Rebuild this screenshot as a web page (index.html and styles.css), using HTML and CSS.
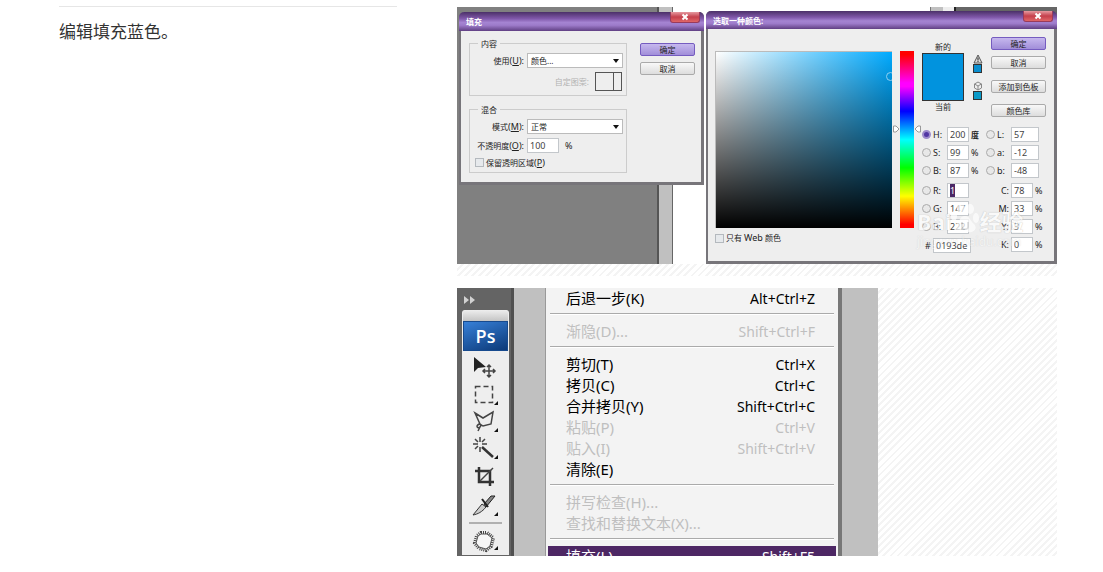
FILE: index.html
```html
<!DOCTYPE html>
<html lang="zh-CN">
<head>
<meta charset="utf-8">
<title>编辑填充蓝色</title>
<link rel="stylesheet" href="styles.css">
</head>
<body>
<main class="step">
  <section class="step-text"><p>编辑填充蓝色。</p></section>
  <section class="step-media">
    <figure class="frame frame-dialogs">
      <div class="desktop">
        <form class="dialog fill-dialog">
          <header class="titlebar"><h2>填充</h2><button type="button" class="close" aria-label="关闭"><svg viewBox="0 0 8 8"><path d="M1.500 1.500L6.500 6.500M6.500 1.500L1.500 6.500"/></svg></button></header>
          <div class="fill-body">
            <div class="fill-groups">
              <fieldset>
                <legend>内容</legend>
                <div class="field"><label for="use">使用<span class="key">(<u>U</u>):</span></label><span class="select"><select id="use"><option>颜色...</option></select></span></div>
                <div class="pattern"><span>自定图案:</span><button type="button" class="pattern-pick" aria-label="自定图案"></button></div>
              </fieldset>
              <fieldset>
                <legend>混合</legend>
                <div class="field"><label for="mode">模式<span class="key">(<u>M</u>):</span></label><span class="select"><select id="mode"><option>正常</option></select></span></div>
                <div class="field"><label for="opacity">不透明度<span class="key">(<u>O</u>):</span></label><span class="opacity"><input type="text" id="opacity" value="100"><span>%</span></span></div>
                <label class="check preserve"><input type="checkbox"><span>保留透明区域<span class="key">(<u>P</u>)</span></span></label>
              </fieldset>
            </div>
            <div class="fill-actions"><button type="button" class="btn primary">确定</button><button type="button" class="btn">取消</button></div>
          </div>
        </form>

        <form class="dialog picker-dialog">
          <header class="titlebar"><h2>选取一种颜色:</h2><button type="button" class="close" aria-label="关闭"><svg viewBox="0 0 8 8"><path d="M1.500 1.500L6.500 6.500M6.500 1.500L1.500 6.500"/></svg></button></header>
          <div class="picker-body">
            <div class="spectrum">
              <div class="shade"><span class="shade-mark"></span></div>
              <label class="check"><input type="checkbox"><span>只有 <span class="key">Web</span> 颜色</span></label>
            </div>
            <div class="hue">
              <svg class="hue-mark" viewBox="0 0 30 8"><path d="M1.500 1h2.500l3 3-3 3H1.500zM28.500 1H26l-3 3 3 3h2.500z" fill="#fff" stroke="#999"/></svg>
            </div>
            <div class="picker-side">
              <div class="picker-top">
                <div class="swatch-col"><span>新的</span><span class="swatch"></span><span>当前</span></div>
                <div class="alerts">
                  <svg viewBox="0 0 10 10"><path d="M5 1l4 8H1z" fill="#ddd" stroke="#555"/><path d="M5 3.500v3M5 7v1" stroke="#222"/></svg><i class="chip"></i>
                  <svg class="cube" viewBox="0 0 10 10"><path d="M5 1l3.500 2v4L5 9 1.500 7V3zM1.500 3L5 5l3.500-2M5 5v4" fill="#eee" stroke="#888"/></svg><i class="chip teal"></i>
                </div>
                <div class="picker-actions">
                  <div class="pair"><button type="button" class="btn primary">确定</button><button type="button" class="btn">取消</button></div>
                  <button type="button" class="btn">添加到色板</button>
                  <button type="button" class="btn">颜色库</button>
                </div>
              </div>
              <div class="values">
                <div class="value-col">
                  <div class="value"><input type="radio" name="c" aria-label="色相" checked><label for="vh">H:</label><input type="text" id="vh" value="200"><b>度</b></div>
                  <div class="value"><input type="radio" name="c" aria-label="饱和度"><label for="vs">S:</label><input type="text" id="vs" value="99"><span>%</span></div>
                  <div class="value"><input type="radio" name="c" aria-label="亮度"><label for="vb">B:</label><input type="text" id="vb" value="87"><span>%</span></div>
                </div>
                <div class="value-col">
                  <div class="value"><input type="radio" name="c" aria-label="L"><label for="vl">L:</label><input type="text" class="wide" id="vl" value="57"></div>
                  <div class="value"><input type="radio" name="c" aria-label="a"><label for="va">a:</label><input type="text" class="wide" id="va" value="-12"></div>
                  <div class="value"><input type="radio" name="c" aria-label="b"><label for="vbb">b:</label><input type="text" class="wide" id="vbb" value="-48"></div>
                </div>
                <div class="value-col">
                  <div class="value"><input type="radio" name="c" aria-label="红"><span id="red-label">R:</span><span class="selected-box" role="textbox" tabindex="0" aria-labelledby="red-label"><mark>1</mark></span></div>
                  <div class="value"><input type="radio" name="c" aria-label="绿"><label for="vg">G:</label><input type="text" id="vg" value="147"></div>
                  <div class="value"><input type="radio" name="c" aria-label="蓝"><label for="vblue">B:</label><input type="text" id="vblue" value="222"></div>
                  <div class="hex"><label for="hex">#</label><input type="text" id="hex" value="0193de"></div>
                </div>
                <div class="value-col">
                  <div class="value ink"><label for="vc">C:</label><input type="text" id="vc" value="78"><span>%</span></div>
                  <div class="value ink"><label for="vm">M:</label><input type="text" id="vm" value="33"><span>%</span></div>
                  <div class="value ink"><label for="vy">Y:</label><input type="text" id="vy" value="3"><span>%</span></div>
                  <div class="value ink"><label for="vk">K:</label><input type="text" id="vk" value="0"><span>%</span></div>
                </div>
              </div>
            </div>
          </div>
        </form>
        <div class="watermark">
          <div class="watermark-brand"><span>Bai</span><svg viewBox="0 0 28 32"><g fill="#fff"><ellipse cx="10" cy="6" rx="4" ry="6"/><ellipse cx="19" cy="7" rx="4" ry="5"/><ellipse cx="3" cy="14" rx="3" ry="5"/><ellipse cx="25" cy="16" rx="3" ry="5"/><path d="M14 14c5 0 5 5 9 8 4 4 0 9-5 8h-8c-6 1-9-4-5-8 4-3 4-8 9-8z"/></g><path d="M11 20v5c0 3 6 3 6 0v-5" fill="none" stroke="#ccc" stroke-width="1.500"/></svg><span>经验</span></div>
          <div class="watermark-site">jingyan.baidu.com</div>
        </div>
      </div>
    </figure>

    <figure class="frame frame-menu">
      <div class="workspace">
        <aside class="tools">
          <svg class="expand" viewBox="0 0 12 8"><path d="M0 0l5 4-5 4zM6 0l5 4-5 4z" fill="#d2d2d2"/></svg>
          <div class="tool-panel">
            <div class="grip"></div>
            <div class="ps">Ps</div>
            <button type="button" class="tool" aria-label="移动"><svg viewBox="0 0 28 27"><path d="M2 2v15l4-4 8-1z" fill="#222"/><path d="M17 10v12M11 16h12M15 12l2-2 2 2M15 20l2 2 2-2M13 14l-2 2 2 2M21 14l2 2-2 2" class="ln"/></svg></button>
            <button type="button" class="tool" aria-label="选框"><svg viewBox="0 0 28 27"><path d="M3.500 4.500h17v16h-17z" class="ln" stroke-dasharray="5 3"/><path class="corner" d="M26 19v4h-4z"/></svg></button>
            <button type="button" class="tool" aria-label="套索"><svg viewBox="0 0 28 27"><path d="M3 4l8 5 10-6-2 12-8 2-3-2zM7 15c-4 2-1 5 1 3s0-4-2-2M8 18l-2 4" class="ln"/><path class="corner" d="M26 19v4h-4z"/></svg></button>
            <button type="button" class="tool" aria-label="魔棒"><svg viewBox="0 0 28 27"><path d="M8 1v5M8 11v5M1 8h5M10 8h5M3 3l3 3M13 3l-3 3M3 13l3-3" class="ln"/><path d="M10 11l11 10" stroke="#333" stroke-width="2.500"/><path class="corner" d="M26 19v4h-4z"/></svg></button>
            <button type="button" class="tool" aria-label="裁剪"><svg viewBox="0 0 28 27"><path d="M7 4v15h15M3 8h15v15" stroke="#333" stroke-width="2.500" fill="none"/><path d="M8 18L21 5" class="ln"/></svg></button>
            <button type="button" class="tool" aria-label="切片"><svg viewBox="0 0 28 27"><path d="M1 25l9-11 4 3C10 22 6 24 1 25z" fill="#ccc" stroke="#333"/><path d="M12 14l7-8h4l-9 11z" fill="#888" stroke="#222"/><path d="M10 9l6 8" stroke="#222" stroke-width="2"/><path class="corner" d="M26 22v4h-4z"/></svg></button>
            <hr>
            <button type="button" class="tool" aria-label="修补"><svg viewBox="0 0 28 27"><path d="M9 5h6l6 5-2 8-5 4-7-2-4-5 2-7z" fill="#f7f7f7" stroke="#444" stroke-width="4" stroke-dasharray="1 1"/><path d="M9 6h6l5 4-2 8-4 3-7-2-3-4 2-7z" fill="#f7f7f7" stroke="#555"/><path class="corner" d="M26 18v4h-4z"/></svg></button>
          </div>
        </aside>
        <nav class="menu">
          <button type="button" class="item"><span>后退一步(K)</span><kbd>Alt+Ctrl+Z</kbd></button>
          <hr>
          <button type="button" class="item" disabled><span>渐隐(D)...</span><kbd>Shift+Ctrl+F</kbd></button>
          <hr>
          <button type="button" class="item"><span>剪切(T)</span><kbd>Ctrl+X</kbd></button>
          <button type="button" class="item"><span>拷贝(C)</span><kbd>Ctrl+C</kbd></button>
          <button type="button" class="item"><span>合并拷贝(Y)</span><kbd>Shift+Ctrl+C</kbd></button>
          <button type="button" class="item" disabled><span>粘贴(P)</span><kbd>Ctrl+V</kbd></button>
          <button type="button" class="item" disabled><span>贴入(I)</span><kbd>Shift+Ctrl+V</kbd></button>
          <button type="button" class="item"><span>清除(E)</span></button>
          <hr>
          <button type="button" class="item" disabled><span>拼写检查(H)...</span></button>
          <button type="button" class="item" disabled><span>查找和替换文本(X)...</span></button>
          <hr>
          <button type="button" class="item active"><span>填充(L)</span><kbd>Shift+F5</kbd></button>
        </nav>
      </div>
    </figure>
  </section>
</main>
</body>
</html>
```
FILE: styles.css
```css
* { box-sizing: border-box; }
body { margin: 0; background: #fff; color: #333; font-family: "Noto Sans", "Noto Sans CJK SC", sans-serif; }
button, input, select { font: inherit; color: inherit; margin: 0; padding: 0; }
svg { display: block; }

.step { display: flex; gap: 60px; padding: 6px 46px 16px 59px; }
.step-text { flex: 1; border-top: 1px solid #e6e6e6; }
.step-text p { margin: 12px 0 0; font-family: "Noto Sans CJK SC", sans-serif; font-size: 17px; line-height: 24px; }
.step-media { flex: 0 0 600px; padding-top: 1px; display: flex; flex-direction: column; gap: 12px; }
.frame { margin: 0; background: repeating-linear-gradient(135deg, #f4f4f4 0 2px, #fff 2px 5px); }
.frame-dialogs { padding-bottom: 12px; }

/* Desktop with the two dialogs */
.desktop {
  position: relative; height: 257px; overflow: hidden; font-size: 8px; line-height: 10px; color: #222;
  background: linear-gradient(90deg, #808080 200px, #555 200px 202px, #c0c0c0 202px 215px, #666 215px 216px, #fff 216px 473px, #777 473px 474px, #c0c0c0 474px 486px, #eee 486px 497px, #222 497px 499px, #666 499px);
}
.dialog { position: absolute; background: #eee; border: solid #77757a; border-width: 0 3px 3px 2px; border-radius: 5px 5px 0 0; }
.fill-dialog { left: 2px; top: 5px; width: 245px; }
.picker-dialog { left: 249px; top: 4px; width: 351px; height: 253px; }
.titlebar {
  display: flex; justify-content: space-between; align-items: flex-start; height: 19px; margin: 0 -3px 0 -2px; padding: 0 4px 0 7px;
  border-radius: 5px 5px 0 0; background: linear-gradient(#4b3068, #8058aa 35%, #a584d2 55%, #9d7bca 70%, #603f83);
}
.titlebar h2 { margin: 0; font-size: 8px; line-height: 20px; color: #fff; font-weight: 700; }
.close { display: grid; place-items: center; width: 30px; height: 11px; border: 1px solid #993b5b; border-top: 0; border-radius: 0 0 3px 3px; background: linear-gradient(#e69aa0, #c5404c 50%, #e06668); }
.close svg { width: 8px; height: 8px; stroke: #fff; stroke-width: 2; }
.key, .desktop input { font-size: 9px; }
.desktop input[type="text"], .selected-box { width: 100%; height: 15px; padding: 0 2px; border: 1px solid #c3c7cb; background: #fff; color: #444; }
.btn { width: 55px; height: 13px; border: 1px solid #aaa; border-radius: 2px; background: linear-gradient(#f8f8f8, #ddd); line-height: 8px; white-space: nowrap; text-align: center; }
.btn.primary { border-color: #755cc0; background: linear-gradient(#c6b8ee, #a18ed9); }
.check { display: flex; align-items: center; gap: 2px; white-space: nowrap; }
.check input { appearance: none; width: 9px; height: 9px; border: 1px solid #b4b9be; background: #e6e9ec; }

.fill-body { display: flex; gap: 13px; padding: 8px 6px 9px 8px; }
.fill-groups { flex: 1; display: flex; flex-direction: column; gap: 9px; }
fieldset { min-width: 0; margin: 0; padding: 5px 3px 4px 0; border: 1px solid #ccc; display: flex; flex-direction: column; gap: 5px; }
legend { margin-left: 8px; padding: 0 3px; line-height: 9px; }
.field { display: grid; grid-template-columns: 54px 1fr; gap: 3px; align-items: center; height: 14px; white-space: nowrap; }
.field > label { text-align: right; }
.select { position: relative; display: block; height: 15px; }
.select::after { content: ""; position: absolute; right: 4px; top: 6px; border: solid transparent; border-width: 4px 3px 0; border-top-color: #111; }
.select select { appearance: none; display: block; width: 100%; height: 15px; padding: 0 3px; border: 1px solid #bbb; border-radius: 0; background: #fff; line-height: 12px; }
.opacity { display: grid; grid-template-columns: 32px 20px; gap: 6px; align-items: center; font-size: 9px; }
.pattern { display: flex; justify-content: flex-end; align-items: center; gap: 6px; padding-right: 1px; color: #b2b2b2; }
.pattern-pick { width: 27px; height: 19px; border: 1px solid #555; background: linear-gradient(90deg, #eee 17px, #555 17px 18px, #eee 18px); }
.preserve { padding-left: 5px; height: 11px; }
.fill-actions { display: flex; flex-direction: column; gap: 6px; padding-top: 4px; }

.picker-dialog .titlebar { height: 18px; }
.picker-body { display: flex; padding: 8px 8px 0 7px; }
.spectrum { flex: 1; padding-top: 14px; display: flex; flex-direction: column; gap: 5px; }
.shade { position: relative; height: 177px; overflow: hidden; border: solid #bbb; border-width: 1px 0 0 1px; background: linear-gradient(to top, #000, transparent), linear-gradient(to right, #fff, #0af); }
.shade-mark { position: absolute; right: -3px; top: 20px; width: 9px; height: 9px; border: 1px solid #8fd0f2; border-radius: 50%; }
.hue { position: relative; width: 14px; height: 177px; margin: 14px 8px 0; background: linear-gradient(#f00 2%, #f0f 18%, #f0f 20%, #00f 34%, #0ff 50%, #0f0 66%, #ff0 82%, #f00 98%); }
.hue-mark { position: absolute; left: -8px; top: 74px; width: 30px; height: 8px; }
.picker-side { width: 124px; }
.picker-top { display: flex; justify-content: space-between; height: 90px; }
.swatch-col { width: 42px; padding-top: 5px; display: flex; flex-direction: column; align-items: center; gap: 1px; }
.swatch { width: 42px; height: 48px; border: 1px solid #333; background: #0193de; }
.alerts { width: 10px; padding-top: 17px; display: flex; flex-direction: column; align-items: center; }
.alerts svg { width: 10px; height: 10px; }
.alerts .cube { margin-top: 8px; }
.chip { width: 9px; height: 9px; border: 1px solid #333; background: #0a8fd0; }
.chip.teal { background: #0a9ac8; }
.picker-actions { display: flex; flex-direction: column; gap: 11px; }
.pair { display: flex; flex-direction: column; gap: 6px; }
.values { display: grid; grid-template-columns: 59px 59px; gap: 5px; }
.value-col { display: flex; flex-direction: column; gap: 3px; }
.value { display: grid; grid-template-columns: 9px 12px 22px 10px; gap: 2px; align-items: center; font-size: 9px; }
.value b { font-size: 8px; }
.value input[type="radio"] { appearance: none; width: 9px; height: 9px; border: 1px solid #aaa; border-radius: 50%; background: #e8e8e8; }
.value input[type="radio"]:checked { background: #5237a4; border: 2px solid #9d8bcb; }
.desktop .value .wide { width: 28px; }
.value.ink { grid-template-columns: 23px 22px 10px; }
.ink label { text-align: right; }
.selected-box { line-height: 13px; }
.selected-box mark { background: #4b2866; color: #fff; }
.hex { display: grid; grid-template-columns: 6px 38px; gap: 2px; padding-left: 3px; margin-top: 1px; align-items: center; font-size: 9px; }

.watermark { position: absolute; left: 460px; top: 193px; color: #fff; opacity: .7; pointer-events: none; text-shadow: 0 0 1px #999; white-space: nowrap; }
.watermark-brand { display: flex; align-items: flex-end; font-size: 22px; font-weight: 700; line-height: 26px; height: 34px; }
.watermark-brand svg { width: 28px; height: 32px; }
.watermark-site { font-size: 12px; line-height: 16px; opacity: .5; }

/* Toolbar and edit menu */
.workspace { display: flex; width: 421px; height: 268px; overflow: hidden; background: #c0c0c0; }
.tools { width: 57px; padding: 8px 0 0 5px; background: #646464; border-right: 3px solid #505050; margin-right: 31px; flex: none; }
.expand { width: 12px; height: 8px; margin: 0 2px 6px; }
.tool-panel { width: 47px; padding: 0 1px; border-radius: 3px 3px 0 0; background: #eee; }
.grip { height: 11px; border-radius: 3px 3px 0 0; background: linear-gradient(#eee, #c4c4c4); }
.ps { margin: 0 0 4px; height: 30px; background: linear-gradient(160deg, #3780d8, #0c3978); border: 1px solid #174a8e; color: #fff; font: 600 18px/28px "Open Sans", sans-serif; text-align: center; }
.tool { display: block; width: 28px; height: 27px; margin-left: 9px; border: 0; background: none; }
.tool svg { width: 28px; height: 27px; fill: none; }
.ln { stroke: #444; stroke-width: 1.500px; fill: none; }
.corner { fill: #111; }
.tool-panel hr { height: 2px; margin: 5px 6px 4px; border: 0; background: #b0b0b0; }
.menu { width: 297px; flex: none; padding: 0 2px; background: #f3f3f3; border-left: 1px solid #999; border-right: 4px solid #777; }
.menu hr { height: 2px; margin: 4px 2px 6px; border: 0; border-top: 1px solid #aaa; background: #fff; }
.item { display: flex; justify-content: space-between; align-items: center; width: 100%; height: 21px; padding: 0 21px 0 18px; border: 0; background: none; color: #000; font-size: 15px; line-height: 21px; white-space: nowrap; }
.item kbd { font-family: inherit; font-size: 14px; }
.item:disabled { color: #bfbfbf; }
.item.active { background: #4d2764; color: #fff; }
```
